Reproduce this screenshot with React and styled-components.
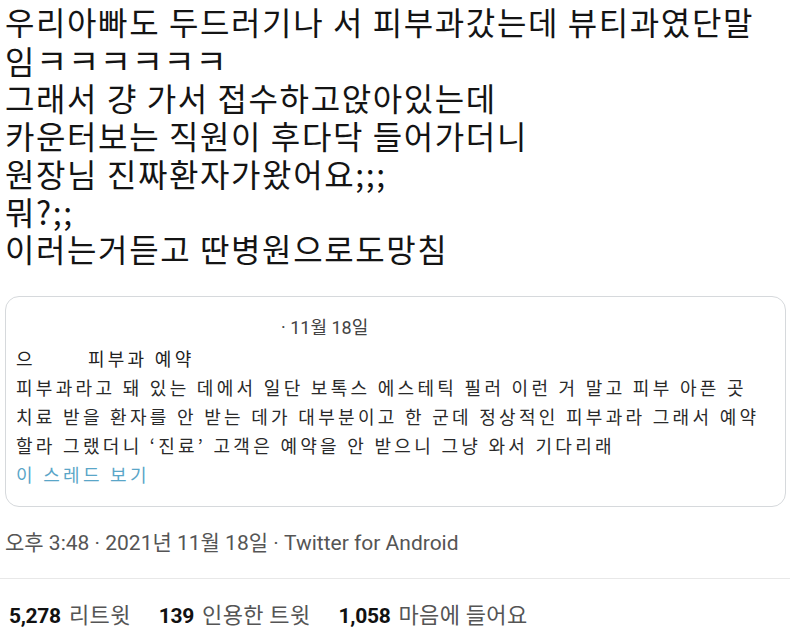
import React from 'react'
import styled, { createGlobalStyle } from 'styled-components'

const Global = createGlobalStyle`
  html, body {
    margin: 0;
    padding: 0;
    background: #ffffff;
  }
  body {
    font-family: "Noto Sans CJK KR", "Noto Sans", sans-serif;
    color: #111;
  }
`

const Page = styled.div`
  width: 800px;
  height: 634px;
  overflow: hidden;
  background: #fff;
  display: flex;
  flex-direction: column;
`

const Body = styled.div`
  padding: 3px 0 0 5px;
  font-size: 32px;
  line-height: 37.7px;
  color: #141414;
  letter-spacing: 1.6px;
`

const Line = styled.div`
  white-space: nowrap;
`

/* the ㅋ jamo are drawn wider and a bit further apart than the syllables */
const Laugh = styled.span`
  font-size: 34px;
  letter-spacing: 0.6px;
`

const Quote = styled.div`
  margin: 28px 14px 0 5px;
  border: 1px solid #d6d9dc;
  border-radius: 14px;
  padding: 16px 10px 17px 10px;
  font-size: 18px;
  line-height: 29px;
  color: #2a2a2a;
  letter-spacing: 3.3px;
`

const QuoteDate = styled.div`
  padding-left: 265px;
  color: #444;
  letter-spacing: 0;
  font-family: "Roboto", "Noto Sans CJK KR", sans-serif;
  font-size: 18px;
`

const QuoteHead = styled.div`
  display: flex;
  gap: 52px;
  margin-top: 2px;
  color: #222;
`

const QuoteText = styled.div`
  white-space: nowrap;
`

const ThreadLink = styled.div`
  color: #5aa6c8;
`

const Meta = styled.div`
  margin-top: 22px;
  padding-left: 5px;
  font-size: 21px;
  line-height: 28px;
  color: #555;
  font-family: "Roboto", "Noto Sans CJK KR", sans-serif;
`

const Divider = styled.hr`
  margin: 21px 10px 0 0;
  border: 0;
  border-top: 1px solid #e8e8e8;
`

const Stats = styled.div`
  display: flex;
  align-items: baseline;
  gap: 28px;
  padding: 20px 0 0 9px;
  font-family: "Roboto", "Noto Sans CJK KR", sans-serif;
  line-height: 28px;
`

const Stat = styled.span`
  display: flex;
  align-items: baseline;
  gap: 8px;
`

const Count = styled.b`
  color: #111;
  font-size: 21px;
  font-weight: 700;
  letter-spacing: -0.3px;
`

const Label = styled.span`
  color: #555;
  font-size: 22px;
  letter-spacing: 0.4px;
  font-family: "Noto Sans CJK KR", sans-serif;
`

const lines = [
  '우리아빠도 두드러기나 서 피부과갔는데 뷰티과였단말',
  null,
  '그래서 걍 가서 접수하고앉아있는데',
  '카운터보는 직원이 후다닥 들어가더니',
  '원장님 진짜환자가왔어요;;;',
  '뭐?;;',
  '이러는거듣고 딴병원으로도망침',
]

const quoteLines = [
  '피부과라고 돼 있는 데에서 일단 보톡스 에스테틱 필러 이런 거 말고 피부 아픈 곳',
  '치료 받을 환자를 안 받는 데가 대부분이고 한 군데 정상적인 피부과라 그래서 예약',
  '할라 그랬더니 ‘진료’ 고객은 예약을 안 받으니 그냥 와서 기다리래',
]

const stats = [
  ['5,278', '리트윗'],
  ['139', '인용한 트윗'],
  ['1,058', '마음에 들어요'],
]

export default function App() {
  return (
    <Page>
      <Global />
      <Body>
        {lines.map((l, i) =>
          l === null ? (
            <Line key={i}>
              임<Laugh>ㅋㅋㅋㅋㅋㅋ</Laugh>
            </Line>
          ) : (
            <Line key={i}>{l}</Line>
          )
        )}
      </Body>

      <Quote>
        <QuoteDate>· 11월 18일</QuoteDate>
        <QuoteHead>
          <span>으</span>
          <span>피부과 예약</span>
        </QuoteHead>
        {quoteLines.map((l) => (
          <QuoteText key={l}>{l}</QuoteText>
        ))}
        <ThreadLink>이 스레드 보기</ThreadLink>
      </Quote>

      <Meta>오후 3:48 · 2021년 11월 18일 · Twitter for Android</Meta>
      <Divider />
      <Stats>
        {stats.map(([n, label]) => (
          <Stat key={label}>
            <Count>{n}</Count>
            <Label>{label}</Label>
          </Stat>
        ))}
      </Stats>
    </Page>
  )
}
